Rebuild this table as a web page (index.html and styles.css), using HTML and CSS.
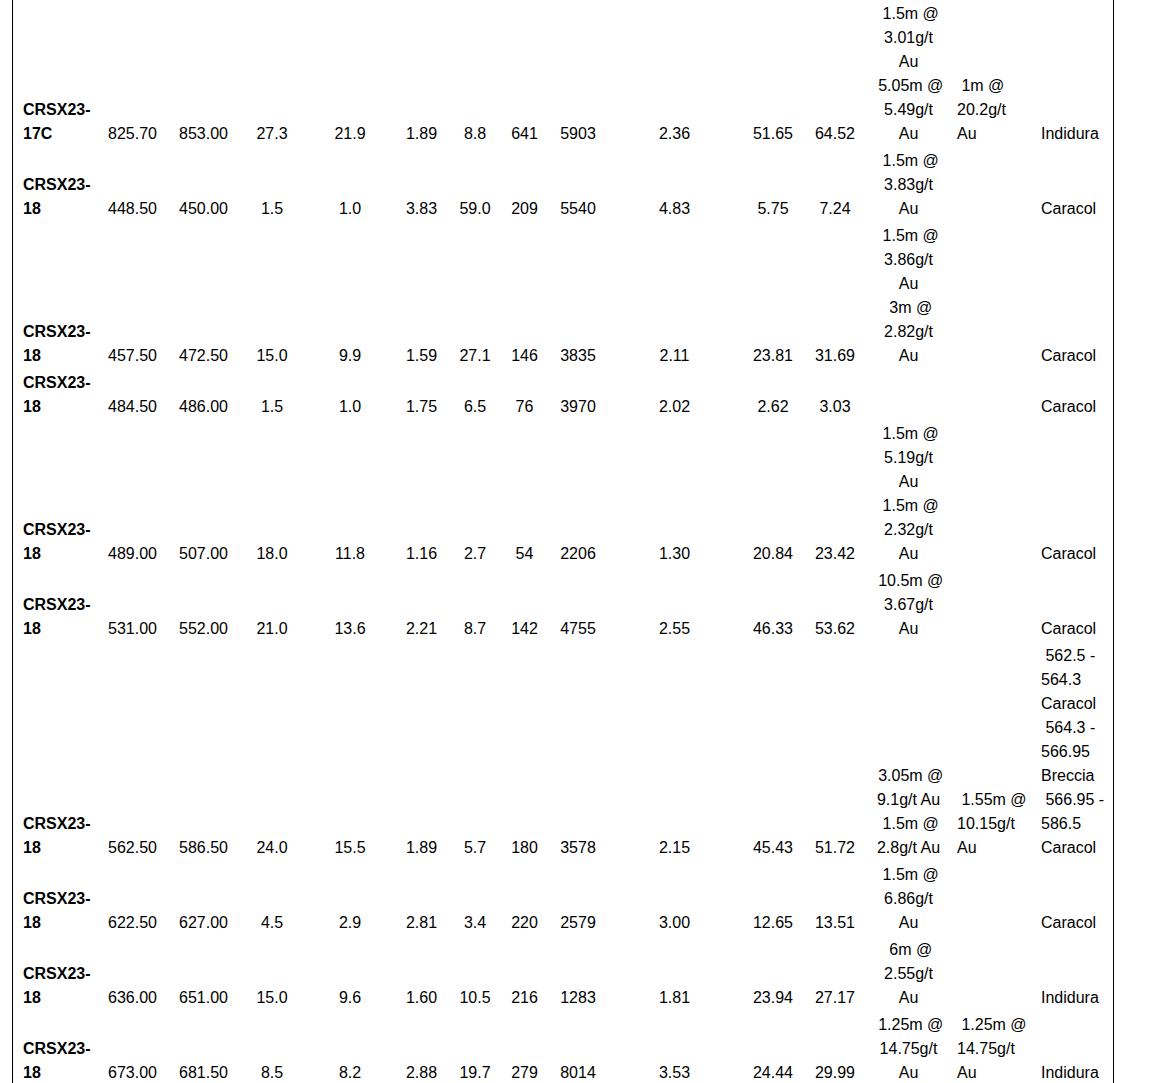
FILE: index.html
```html
<!DOCTYPE html>
<html>
<head>
<meta charset="utf-8">
<link rel="stylesheet" href="styles.css">
</head>
<body>
<div class="sheet">
<table class="assays">
<colgroup>
<col class="c1"><col class="c2"><col class="c3"><col class="c4"><col class="c5"><col class="c6"><col class="c7"><col class="c8"><col class="c9"><col class="c10"><col class="c11"><col class="c12"><col class="c13"><col class="c14"><col class="c15">
</colgroup>
<tbody>
<tr>
<td class="hole">CRSX23-17C</td><td>825.70</td><td>853.00</td><td>27.3</td><td>21.9</td><td>1.89</td><td>8.8</td><td>641</td><td>5903</td><td>2.36</td><td>51.65</td><td>64.52</td>
<td class="int">&nbsp;1.5m @ 3.01g/t Au<br>&nbsp;5.05m @ 5.49g/t Au</td><td class="int2">&nbsp;1m @ 20.2g/t Au</td><td class="host">Indidura</td>
</tr>
<tr>
<td class="hole">CRSX23-18</td><td>448.50</td><td>450.00</td><td>1.5</td><td>1.0</td><td>3.83</td><td>59.0</td><td>209</td><td>5540</td><td>4.83</td><td>5.75</td><td>7.24</td>
<td class="int">&nbsp;1.5m @ 3.83g/t Au</td><td class="int2"></td><td class="host">Caracol</td>
</tr>
<tr>
<td class="hole">CRSX23-18</td><td>457.50</td><td>472.50</td><td>15.0</td><td>9.9</td><td>1.59</td><td>27.1</td><td>146</td><td>3835</td><td>2.11</td><td>23.81</td><td>31.69</td>
<td class="int">&nbsp;1.5m @ 3.86g/t Au<br>&nbsp;3m @ 2.82g/t Au</td><td class="int2"></td><td class="host">Caracol</td>
</tr>
<tr>
<td class="hole">CRSX23-18</td><td>484.50</td><td>486.00</td><td>1.5</td><td>1.0</td><td>1.75</td><td>6.5</td><td>76</td><td>3970</td><td>2.02</td><td>2.62</td><td>3.03</td>
<td class="int"></td><td class="int2"></td><td class="host">Caracol</td>
</tr>
<tr>
<td class="hole">CRSX23-18</td><td>489.00</td><td>507.00</td><td>18.0</td><td>11.8</td><td>1.16</td><td>2.7</td><td>54</td><td>2206</td><td>1.30</td><td>20.84</td><td>23.42</td>
<td class="int">&nbsp;1.5m @ 5.19g/t Au<br>&nbsp;1.5m @ 2.32g/t Au</td><td class="int2"></td><td class="host">Caracol</td>
</tr>
<tr>
<td class="hole">CRSX23-18</td><td>531.00</td><td>552.00</td><td>21.0</td><td>13.6</td><td>2.21</td><td>8.7</td><td>142</td><td>4755</td><td>2.55</td><td>46.33</td><td>53.62</td>
<td class="int">&nbsp;10.5m @ 3.67g/t Au</td><td class="int2"></td><td class="host">Caracol</td>
</tr>
<tr>
<td class="hole">CRSX23-18</td><td>562.50</td><td>586.50</td><td>24.0</td><td>15.5</td><td>1.89</td><td>5.7</td><td>180</td><td>3578</td><td>2.15</td><td>45.43</td><td>51.72</td>
<td class="int">&nbsp;3.05m @ 9.1g/t Au<br>&nbsp;1.5m @ 2.8g/t Au</td><td class="int2">&nbsp;1.55m @ 10.15g/t Au</td><td class="host">&nbsp;562.5 - 564.3 Caracol<br>&nbsp;564.3 - 566.95 Breccia<br>&nbsp;566.95 - 586.5 Caracol</td>
</tr>
<tr>
<td class="hole">CRSX23-18</td><td>622.50</td><td>627.00</td><td>4.5</td><td>2.9</td><td>2.81</td><td>3.4</td><td>220</td><td>2579</td><td>3.00</td><td>12.65</td><td>13.51</td>
<td class="int">&nbsp;1.5m @ 6.86g/t Au</td><td class="int2"></td><td class="host">Caracol</td>
</tr>
<tr>
<td class="hole">CRSX23-18</td><td>636.00</td><td>651.00</td><td>15.0</td><td>9.6</td><td>1.60</td><td>10.5</td><td>216</td><td>1283</td><td>1.81</td><td>23.94</td><td>27.17</td>
<td class="int">&nbsp;6m @ 2.55g/t Au</td><td class="int2"></td><td class="host">Indidura</td>
</tr>
<tr>
<td class="hole">CRSX23-18</td><td>673.00</td><td>681.50</td><td>8.5</td><td>8.2</td><td>2.88</td><td>19.7</td><td>279</td><td>8014</td><td>3.53</td><td>24.44</td><td>29.99</td>
<td class="int">&nbsp;1.25m @ 14.75g/t Au</td><td class="int2">&nbsp;1.25m @ 14.75g/t Au</td><td class="host">Indidura</td>
</tr>
</tbody>
</table>
</div>
</body>
</html>
```

FILE: styles.css
```css
html, body {
  margin: 0;
  padding: 0;
  background: #fff;
}

body {
  font-family: "Liberation Sans", Arial, sans-serif;
  font-size: 16px;
  line-height: 24px;
  color: #000;
}

.sheet {
  margin-left: 12px;
  width: 1100px;
  border-left: 1px solid #000;
  border-right: 1px solid #000;
}

.assays {
  width: 1100px;
  table-layout: fixed;
  border-collapse: separate;
  border-spacing: 0;
}

.c1 { width: 87px; }
.c2 { width: 65px; }
.c3 { width: 77px; }
.c4 { width: 60px; }
.c5 { width: 96px; }
.c6 { width: 47px; }
.c7 { width: 60px; }
.c8 { width: 39px; }
.c9 { width: 68px; }
.c10 { width: 125px; }
.c11 { width: 72px; }
.c12 { width: 52px; }
.c13 { width: 95px; }
.c14 { width: 84px; }
.c15 { width: 73px; }

.assays td {
  padding: 2px 0 1px;
  vertical-align: bottom;
  text-align: center;
  white-space: normal;
}

.assays td.hole {
  text-align: left;
  font-weight: bold;
  padding-left: 10px;
}

.assays td.int {
  padding-left: 12px;
  padding-right: 12px;
}

.assays td.int2 {
  text-align: left;
  padding-left: 1px;
  padding-right: 12px;
}

.assays td.host {
  text-align: left;
  padding-left: 1px;
}
```
